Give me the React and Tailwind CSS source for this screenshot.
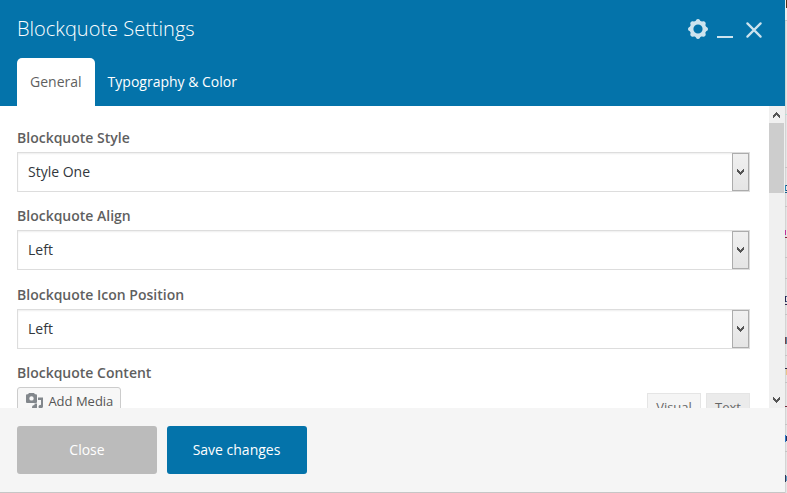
import React from "react";

function GearIcon() {
  return (
    <svg width="20" height="20" viewBox="0 0 20 20" fill="none">
      <g fill="#cde3ee">
        {[0, 45, 90, 135, 180, 225, 270, 315].map((a) => (
          <path key={a} d="M6.6 3.6L8.2 1Q8.6 0 10 0Q11.4 0 11.8 1L13.4 3.6Z" transform={`rotate(${a} 10 10)`} />
        ))}
      </g>
      <circle cx="10" cy="10" r="6.4" stroke="#cde3ee" strokeWidth="3.6" />
    </svg>
  );
}

function Chevron({ up }) {
  return (
    <svg width="7" height="6" viewBox="0 0 7 6" fill="#555" shapeRendering="crispEdges">
      <path
        d="M0 0H1V1H2V2H3V3H4V2H5V1H6V0H7V3H6V4H5V5H4V6H3V5H2V4H1V3H0Z"
        transform={up ? "matrix(1 0 0 -1 0 6)" : undefined}
      />
    </svg>
  );
}

function Field({ label, value }) {
  return (
    <div className="h-[78px] shrink-0">
      <div className="h-[26px] leading-5 pt-[2px] font-semibold text-[#5f5f5f]">{label}</div>
      <div className="flex h-10 w-[733px] border border-[#dddddd] bg-white shadow-[inset_0_1px_2px_rgba(0,0,0,0.07)]">
        <div className="flex-1 pl-[10px] leading-[38px] text-[#32373c]">{value}</div>
        <div className="flex h-[38px] w-[17px] justify-center border border-[#acacac] bg-linear-to-b from-[#f0f0f0] to-[#e5e5e5] pt-[15px]">
          <Chevron />
        </div>
      </div>
    </div>
  );
}

const dividers = [20, 167, 206, 257, 278, 314, 355, 382, 424, 451];

// Edge of the page behind the dialog: [x, y, width, height, colour]
const marks = [
  [1, 0, 1, 8, "#553019"],
  [0, 114, 2, 1, "#b5e0d5"],
  [0, 185, 1, 6, "#2a85b5"], [1, 185, 1, 1, "#1a4b6e"], [1, 190, 1, 1, "#1a4b6e"], [0, 192, 2, 1, "#17618c"],
  [0, 230, 1, 5, "#c0309a"], [1, 237, 1, 1, "#8a2040"], [0, 237, 1, 1, "#8a2040"],
  [0, 296, 1, 6, "#252550"], [1, 296, 1, 1, "#40608a"], [1, 301, 1, 1, "#40608a"], [0, 304, 2, 1, "#302850"],
  [0, 337, 1, 7, "#7a4545"], [1, 337, 1, 7, "#5580a0"],
  [0, 368, 2, 1, "#252545"], [1, 369, 1, 6, "#e8c58a"],
  [0, 406, 2, 1, "#702838"],
  [0, 435, 1, 7, "#2a75c5"], [1, 436, 1, 5, "#203060"],
  [0, 475, 1, 7, "#303858"], [1, 476, 1, 5, "#5b9cc5"],
];

export default function App() {
  return (
    <div className="flex h-[493px] w-[787px] overflow-hidden bg-[#e5e5e5] font-['Open_Sans',sans-serif] text-sm">
      <div className="flex w-[785px] shrink-0 flex-col border-b border-[#c6c6c6]">
        <header className="flex h-[106px] shrink-0 flex-col bg-[#0473aa]">
          <div className="flex h-[58px] justify-between pl-[17px] pr-[23px]">
            <h1 className="pt-[15px] text-[20px] leading-[28px] font-light text-white">Blockquote Settings</h1>
            <div className="flex pt-[19px]">
              <GearIcon />
              <span className="ml-[9px] mt-[17px] h-[2px] w-4 bg-[#cde3ee]" />
              <svg className="ml-[13px] mt-[3px]" width="16" height="16" viewBox="0 0 16 16" stroke="#cde3ee" strokeWidth="2.2" strokeLinecap="round">
                <path d="M1.4 1.4L14.6 14.6M14.6 1.4L1.4 14.6" />
              </svg>
            </div>
          </div>
          <nav className="flex h-12 pl-[17px] leading-12">
            <div className="w-[78px] rounded-t-[5px] bg-white pl-[13px] text-[#5f5f5f]">General</div>
            <div className="pl-[12.6px] text-white">Typography &amp; Color</div>
          </nav>
        </header>

        <main className="flex h-[302px] shrink-0 overflow-hidden bg-white">
          <div className="flex w-[769px] flex-col pl-[17px] pt-5">
            <Field label="Blockquote Style" value="Style One" />
            <Field label="Blockquote Align" value="Left" />
            <div className="h-px shrink-0" />
            <Field label="Blockquote Icon Position" value="Left" />
            <div className="h-[26px] shrink-0 pt-[2px] leading-5 font-semibold text-[#5f5f5f]">Blockquote Content</div>
            <div className="flex w-[733px] items-start text-[13px]">
              <div className="flex h-7 w-[104px] rounded-[3px] border border-[#cccccc] bg-[#f7f7f7] pl-[8px] leading-[26px] text-[#555]">
                <svg className="mt-[5px] mr-[5.4px] shrink-0" width="17" height="18" viewBox="0 0 17 18" fill="#82878c">
                  <path fillRule="evenodd" d="M0 2.5Q0 1.2 1 1.2H2L3 0H8L9 1.2H10Q11 1.2 11 2.5V9Q11 10 10 10H1Q0 10 0 9ZM5.5 3.2A2.2 2.2 0 1 0 5.5 7.6A2.2 2.2 0 1 0 5.5 3.2Z" />
                  <path d="M12 4.5H17V13.5Q16.5 15.5 14.5 15.5Q12.5 15.5 12.5 13.5Q12.5 11.7 15 11.7V7H12ZM11 10.5V14.5Q10.5 16.5 8 16.5Q6 16 6 14Q6.3 12.2 8.5 12V10.5Z" />
                </svg>
                Add Media
              </div>
              <div className="mt-[6px] ml-auto flex gap-[5px] leading-[27px] text-[#666]">
                <div className="h-8 w-[54px] border border-[#e5e5e5] bg-[#f5f5f5] text-center">Visual</div>
                <div className="h-8 w-[44px] border border-[#e5e5e5] bg-[#ebebeb] text-center">Text</div>
              </div>
            </div>
          </div>
          <div className="flex w-4 flex-col bg-[#f0f0f0] pl-1">
            <div className="h-[17px] shrink-0 pt-[6px]"><Chevron up /></div>
            <div className="-ml-1 h-[70px] w-[15px] bg-[#cdcdcd]" />
            <div className="mt-auto h-[11px]"><Chevron /></div>
          </div>
        </main>

        <footer className="flex h-[84px] gap-[10px] bg-[#f5f5f5] pt-[18px] pl-[17px] text-white">
          <button className="h-12 w-[140px] rounded-[3px] bg-[#bbbbbb]">Close</button>
          <button className="h-12 w-[140px] rounded-[3px] bg-[#0473aa] pr-px">Save changes</button>
        </footer>
      </div>
      <svg className="shrink-0" width="2" height="493" shapeRendering="crispEdges">
        <rect width="2" height="20" fill="#eeeeee" />
        <rect y="20" width="1" height="473" fill="#d4d4d4" />
        {dividers.map((y) => (
          <rect key={y} y={y} width="2" height="1" fill="#c4c4c4" />
        ))}
        {marks.map(([x, y, w, h, c]) => (
          <rect key={`${x}-${y}`} x={x} y={y} width={w} height={h} fill={c} />
        ))}
      </svg>
    </div>
  );
}
